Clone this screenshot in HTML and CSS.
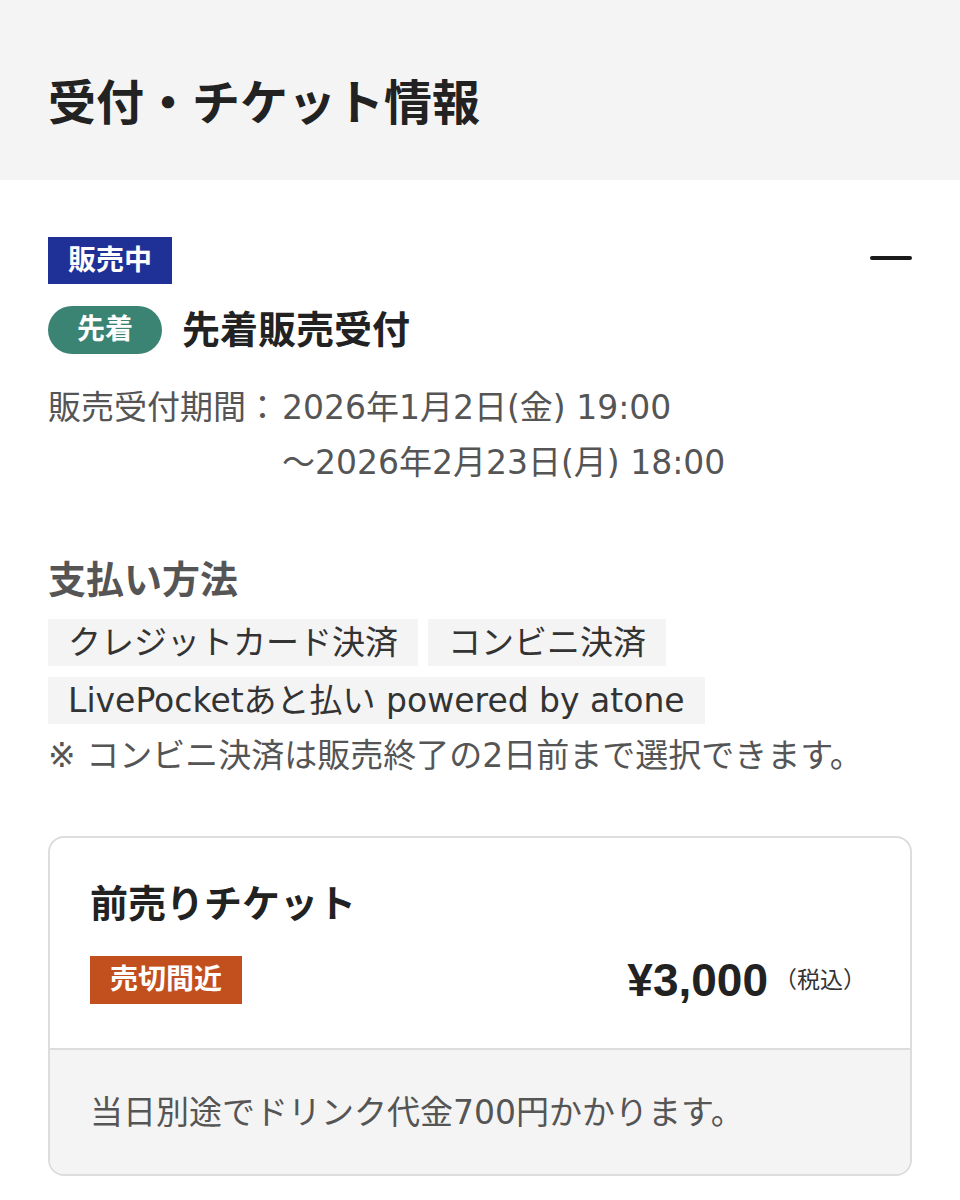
FILE: index.html
```html
<!DOCTYPE html>
<html lang="ja">
<head>
  <meta charset="UTF-8">
  <meta name="viewport" content="width=device-width, initial-scale=1.0">
  <title>受付・チケット情報</title>
  <link rel="stylesheet" href="styles.css">
</head>
<body>
  <header class="page-header">
    <h1>受付・チケット情報</h1>
  </header>

  <section class="sale">
    <div class="sale-top">
      <span class="status-badge">販売中</span>
      <button class="collapse-btn" aria-label="閉じる"><span></span></button>
    </div>

    <div class="sale-title">
      <span class="type-pill">先着</span>
      <h2>先着販売受付</h2>
    </div>

    <dl class="period">
      <dt>販売受付期間：</dt>
      <dd>2026年1月2日(金) 19:00<br>～2026年2月23日(月) 18:00</dd>
    </dl>

    <h3 class="pay-heading">支払い方法</h3>
    <ul class="pay-list">
      <li>クレジットカード決済</li>
      <li>コンビニ決済</li>
      <li>LivePocketあと払い powered by atone</li>
    </ul>
    <p class="note">※ コンビニ決済は販売終了の2日前まで選択できます。</p>

    <div class="ticket">
      <div class="ticket-main">
        <h4>前売りチケット</h4>
        <div class="ticket-row">
          <span class="stock-badge">売切間近</span>
          <div class="price">¥3,000<span class="tax">（税込）</span></div>
        </div>
      </div>
      <div class="ticket-foot">当日別途でドリンク代金700円かかります。</div>
    </div>
  </section>
</body>
</html>
```

FILE: styles.css
```css
body {
  margin: 0;
  background: #ffffff;
  color: #222222;
  font-family: "Liberation Sans", "Noto Sans CJK JP", sans-serif;
}
.page-header {
  background: #f4f4f4;
  padding: 80px 48px 52px;
}
.page-header h1 {
  margin: 0;
  font-size: 48px;
  line-height: 48px;
  font-weight: 700;
  color: #222;
}
.sale {
  padding: 57px 48px 40px;
}
.sale-top {
  display: flex;
  justify-content: space-between;
  align-items: center;
}
.status-badge {
  background: #1f3197;
  color: #fff;
  font-size: 28px;
  font-weight: 700;
  line-height: 47px;
  padding: 0 20px;
}
.collapse-btn {
  background: none;
  border: none;
  padding: 0;
  width: 42px;
  height: 42px;
  display: flex;
  align-items: center;
  cursor: pointer;
}
.collapse-btn span {
  display: block;
  width: 42px;
  height: 4px;
  margin-bottom: 6px;
  border-radius: 2px;
  background: #1a1a1a;
}
.sale-title {
  display: flex;
  align-items: center;
  gap: 20px;
  margin-top: 22px;
}
.type-pill {
  background: #3b8373;
  color: #fff;
  font-size: 28px;
  font-weight: 700;
  line-height: 48px;
  padding: 0 29px;
  border-radius: 24px;
}
.sale-title h2 {
  margin: 0;
  font-size: 38px;
  line-height: 48px;
  font-weight: 700;
  color: #222;
}

/* body copy: wider latin to match the reference */
.period, .pay-list li, .note, .ticket-foot {
  font-family: "DejaVu Sans", "Noto Sans CJK JP", sans-serif;
  font-size: 33px;
}
.period {
  display: flex;
  margin: 26px 0 0;
  line-height: 55px;
  color: #555;
}
.period dt {
  white-space: nowrap;
  padding-right: 3px;
}
.period dd {
  margin: 0;
}
.pay-heading {
  margin: 65px 0 0;
  font-size: 38px;
  line-height: 50px;
  font-weight: 700;
  color: #555;
}
.pay-list {
  list-style: none;
  margin: 14px 0 0;
  padding: 0;
  display: flex;
  flex-wrap: wrap;
  gap: 11px 10px;
}
.pay-list li {
  background: #f4f4f4;
  color: #333;
  line-height: 47px;
  padding: 0 20px;
}
.note {
  margin: 8px 0 0;
  line-height: 48px;
  color: #555;
}
.ticket {
  margin-top: 56px;
  border: 2px solid #dddddd;
  border-radius: 16px;
  overflow: hidden;
}
.ticket-main {
  padding: 40px 44px 44px 40px;
}
.ticket-main h4 {
  margin: 0;
  font-size: 38px;
  line-height: 52px;
  font-weight: 700;
  color: #222;
}
.ticket-row {
  display: flex;
  justify-content: space-between;
  align-items: center;
  margin-top: 26px;
}
.stock-badge {
  background: #c2501f;
  color: #fff;
  font-size: 28px;
  font-weight: 700;
  line-height: 48px;
  padding: 0 20px;
}
.price {
  font-size: 46px;
  line-height: 48px;
  font-weight: 700;
  color: #222;
  display: flex;
  align-items: center;
}
.price .tax {
  font-size: 23px;
  font-weight: 400;
  color: #333;
  margin-left: 6px;
}
.ticket-foot {
  background: #f4f4f4;
  border-top: 2px solid #dddddd;
  padding: 39px 40px 37px;
  line-height: 48px;
  color: #555;
}
```
